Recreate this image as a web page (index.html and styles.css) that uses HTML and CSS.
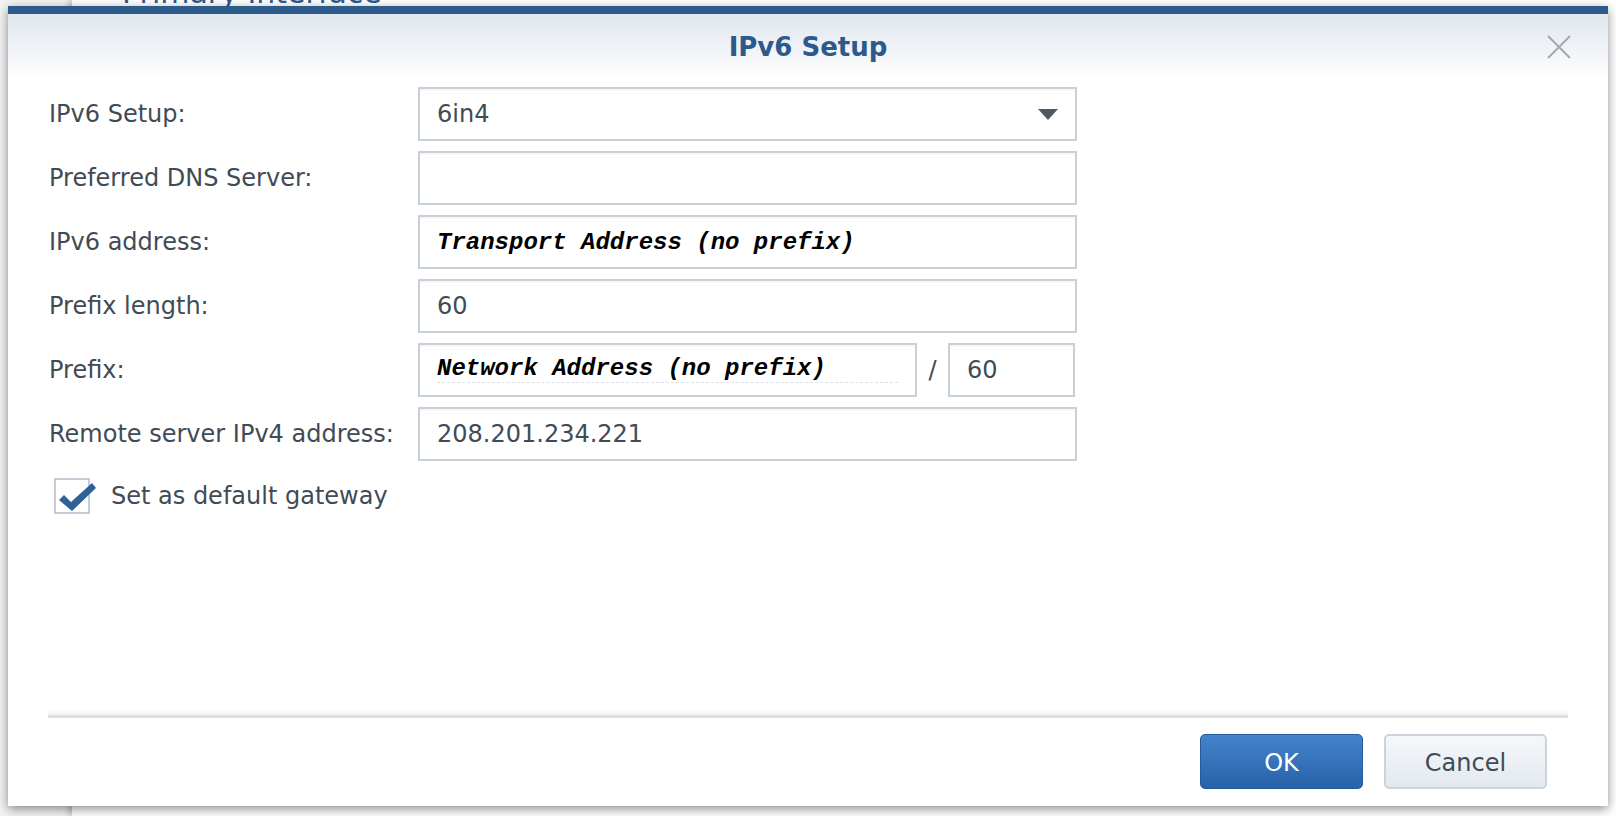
FILE: index.html
```html
<!DOCTYPE html>
<html lang="en">
<head>
    <meta charset="UTF-8">
    <meta name="viewport" content="width=device-width, initial-scale=1.0">
    <title>IPv6 Setup</title>
    <link rel="stylesheet" href="styles.css">
</head>
<body>

<div class="desktop">
    <!-- page behind the modal -->
    <div class="sidebar"></div>
    <div class="panel">
        <h2 class="panel-title">Primary Interface</h2>
    </div>

    <div class="dialog">
        <div class="dialog-bar"></div>
        <header class="dialog-header">
            <h1>IPv6 Setup</h1>
            <span class="close">
                <svg width="26" height="24" viewBox="0 0 26 24">
                    <path d="M2 1 L24 23 M24 1 L2 23" stroke="#a2aab1" stroke-width="2" fill="none"/>
                </svg>
            </span>
        </header>

        <section class="form">
            <label>IPv6 Setup:</label>
            <div class="field select">
                <span>6in4</span>
                <svg width="20" height="11" viewBox="0 0 20 11"><polygon points="0,0 20,0 10,11" fill="#4f5963"/></svg>
            </div>

            <label>Preferred DNS Server:</label>
            <div class="field"></div>

            <label>IPv6 address:</label>
            <div class="field"><span class="mono">Transport Address (no prefix)</span></div>

            <label>Prefix length:</label>
            <div class="field">60</div>

            <label>Prefix:</label>
            <div class="prefix">
                <div class="field prefix-net"><span class="mono dotted">Network Address (no prefix)</span></div>
                <span class="slash">/</span>
                <div class="field prefix-len">60</div>
            </div>

            <label>Remote server IPv4 address:</label>
            <div class="field">208.201.234.221</div>

            <div class="check-row">
                <span class="checkbox">
                    <svg width="44" height="38" viewBox="0 0 44 38">
                        <polygon points="5,22 10,17 17,24 38,5 42,10 18,33" fill="#2f6096"/>
                    </svg>
                </span>
                <span>Set as default gateway</span>
            </div>
        </section>

        <footer class="dialog-footer">
            <div class="divider"></div>
            <div class="buttons">
                <button class="btn btn-ok">OK</button>
                <button class="btn btn-cancel">Cancel</button>
            </div>
        </footer>
    </div>
</div>

</body>
</html>
```

FILE: styles.css
```css
body {
    margin: 0;
    font-family: "DejaVu Sans", Verdana, sans-serif;
    color: #414b55;
}

.desktop {
    position: relative;
    width: 1616px;
    height: 816px;
    overflow: hidden;
    display: flex;
    background-color: #f1f1f1;
}

.sidebar {
    width: 72px;
    background-color: #f3f3f3;
}

.panel {
    flex: 1;
    background-color: #fff;
    box-shadow: -4px 0 6px rgba(0, 0, 0, 0.18);
    padding-left: 50px;
}

.panel-title {
    margin: -22px 0 0;
    font-size: 30px;
    line-height: 30px;
    font-weight: normal;
    color: #2c5a8d;
}

/* modal window */
.dialog {
    position: absolute;
    left: 8px;
    top: 6px;
    width: 1600px;
    height: 800px;
    background-color: #fff;
    box-shadow: 0 3px 10px rgba(0, 0, 0, 0.45);
    display: flex;
    flex-direction: column;
}

.dialog-bar {
    height: 8px;
    background-color: #2d5b8c;
}

.dialog-header {
    position: relative;
    height: 65px;
    display: flex;
    align-items: center;
    justify-content: center;
    background: linear-gradient(to bottom, #dfe6ee, #ffffff);
}

.dialog-header h1 {
    margin: 0;
    font-size: 26px;
    font-weight: bold;
    color: #2c5a8d;
}

.close {
    position: absolute;
    right: 36px;
    top: 21px;
    display: flex;
}

.form {
    padding: 8px 40px 0 41px;
    display: grid;
    grid-template-columns: 369px 659px;
    grid-auto-rows: 54px;
    row-gap: 10px;
    align-items: center;
    font-size: 24px;
}

.field {
    height: 54px;
    box-sizing: border-box;
    border: 2px solid #c7d0d9;
    box-shadow: inset 0 2px 2px rgba(0, 0, 0, 0.04);
    padding: 0 17px;
    display: flex;
    align-items: center;
    background-color: #fff;
}

.select {
    justify-content: space-between;
}

.mono {
    font-family: "Liberation Mono", "Courier New", monospace;
    font-weight: bold;
    font-style: italic;
    color: #000;
}

.dotted {
    flex: 1;
    margin-top: -2px;
    border-bottom: 1px dashed #dde1e5;
}

.prefix {
    display: flex;
    align-items: center;
}

.prefix-net {
    width: 499px;
}

.slash {
    width: 31px;
    text-align: center;
}

.prefix-len {
    width: 127px;
}

.check-row {
    grid-column: 1 / 3;
    align-self: start;
    margin-top: 7px;
    padding-left: 5px;
    display: flex;
    align-items: center;
    gap: 21px;
}

.checkbox {
    position: relative;
    width: 36px;
    height: 36px;
    box-sizing: border-box;
    border: 2px solid #c5ced8;
}

.checkbox svg {
    position: absolute;
    left: -2px;
    top: -2px;
}

.dialog-footer {
    margin-top: auto;
}

.divider {
    margin: 0 40px;
    height: 6px;
    background: linear-gradient(to bottom, #ffffff, #f1f1f1);
    border-bottom: 3px solid #dedfe1;
}

.buttons {
    display: flex;
    justify-content: flex-end;
    gap: 21px;
    padding: 16px 61px 17px 0;
}

.btn {
    width: 163px;
    height: 55px;
    padding-top: 4px;
    font-family: "DejaVu Sans", Verdana, sans-serif;
    font-size: 24px;
    border-radius: 5px;
    cursor: pointer;
}

.btn-ok {
    color: #fff;
    background: linear-gradient(to bottom, #4384cb, #2862a9);
    border: 1px solid #245b9c;
}

.btn-cancel {
    color: #414b55;
    background: linear-gradient(to bottom, #f5f8fb, #e3e9ef);
    border: 2px solid #cbd4dd;
}
```
